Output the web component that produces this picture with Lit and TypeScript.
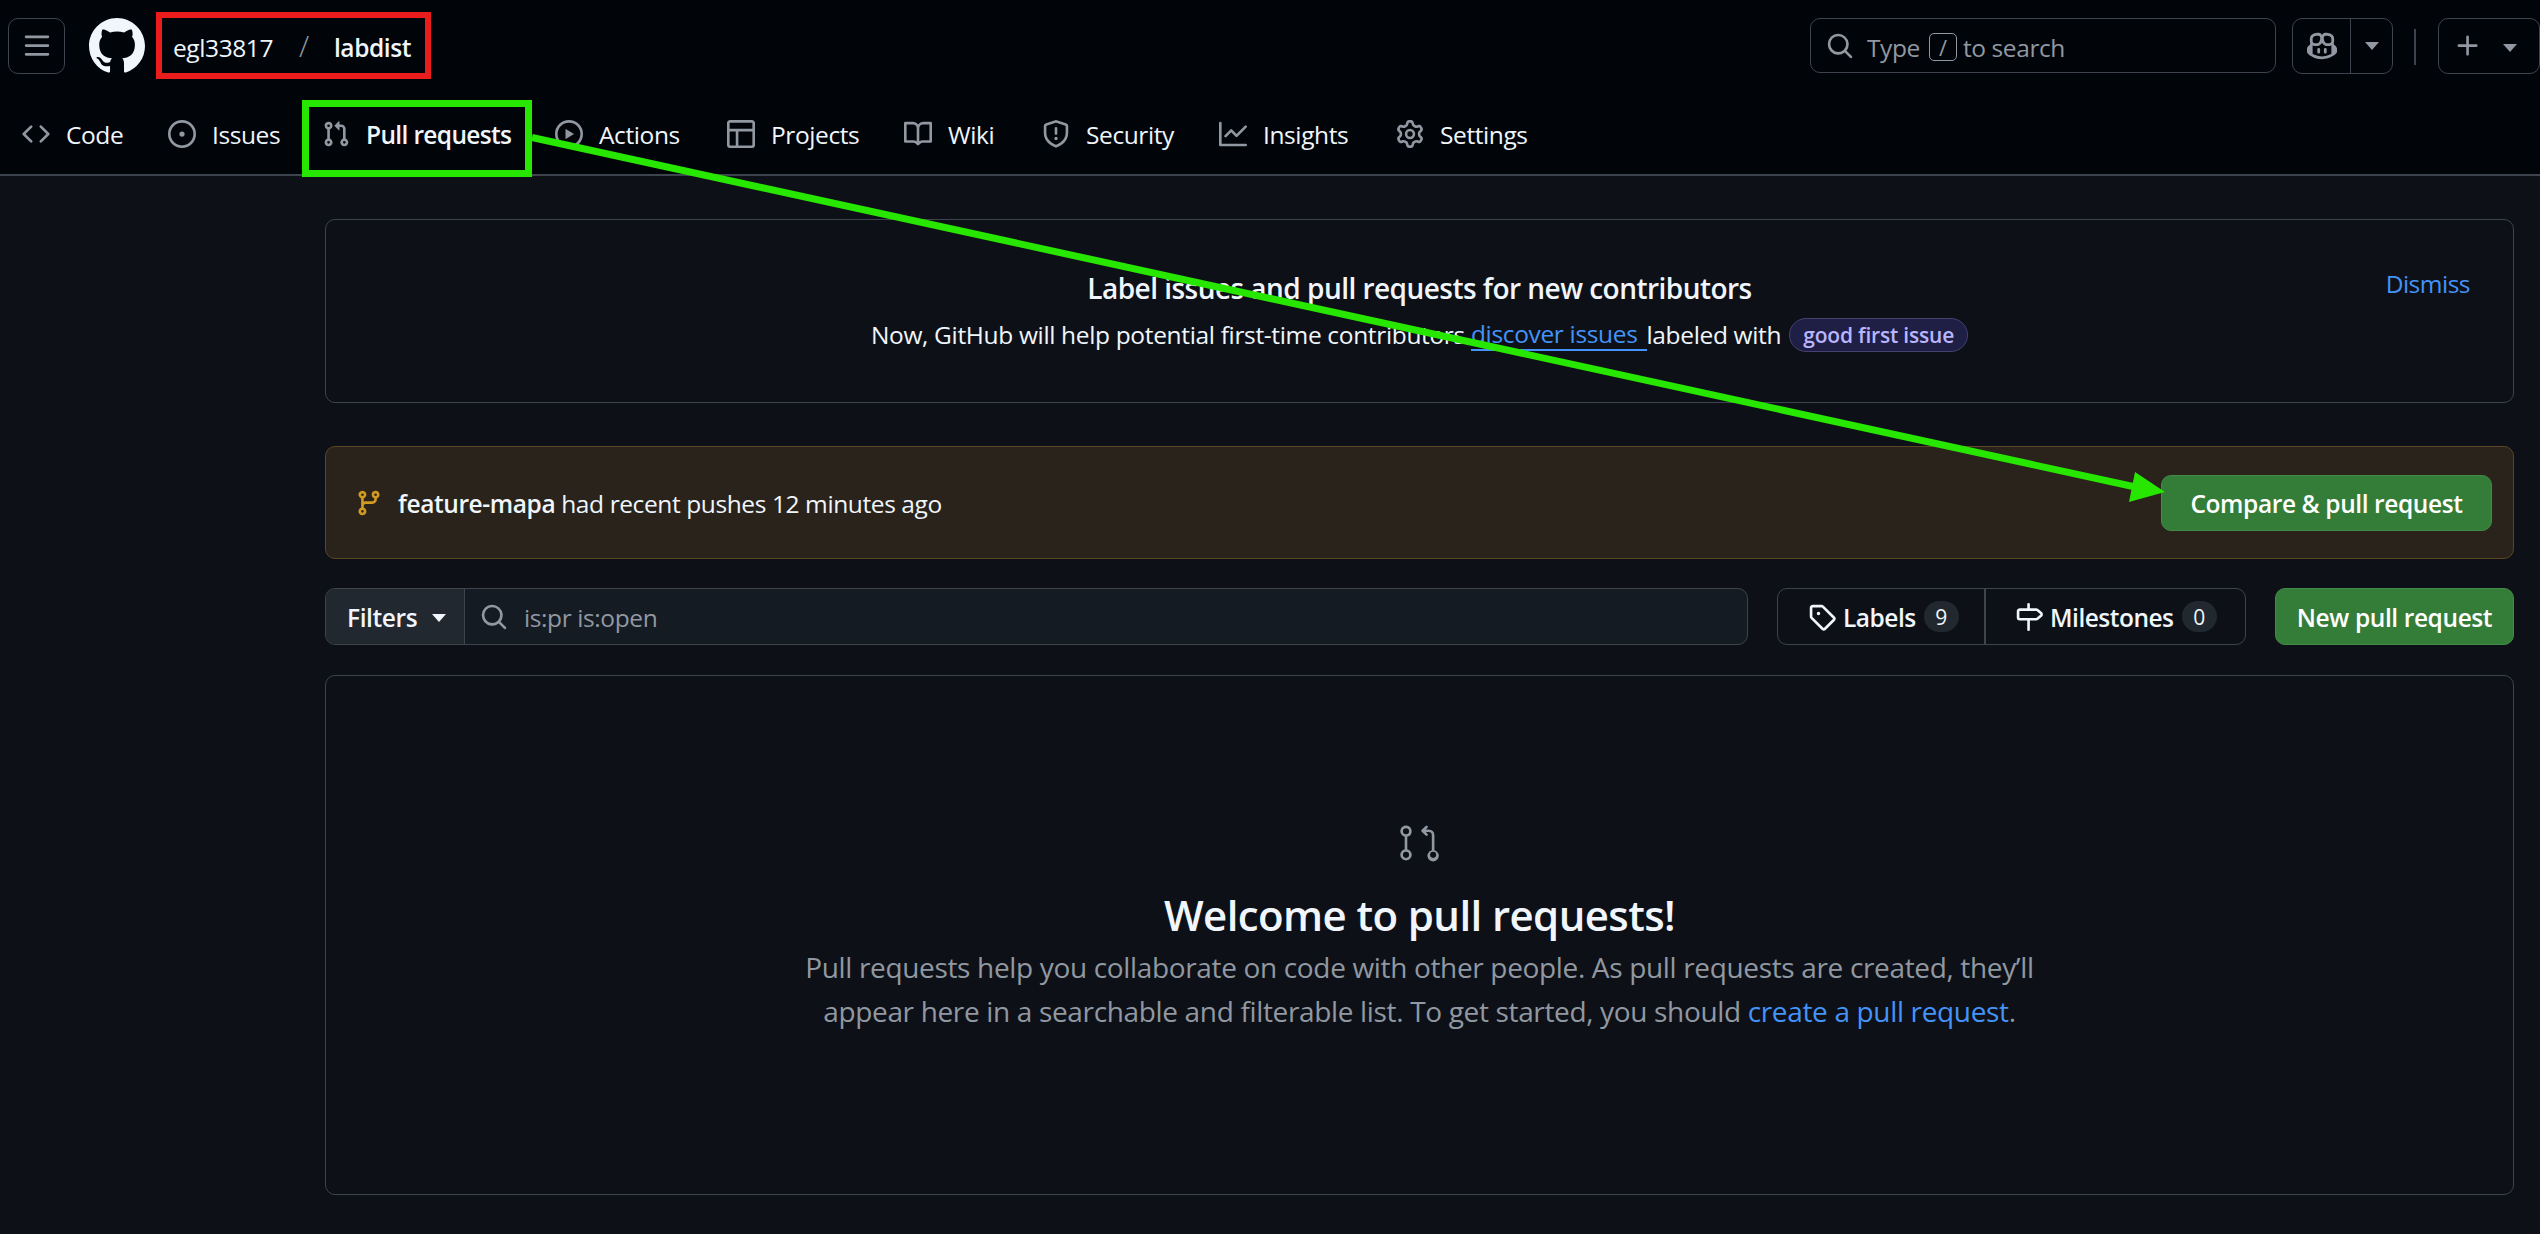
import { LitElement, html, css, svg } from "lit";
import { customElement } from "lit/decorators.js";

const ic = (d: string, size = 28, vb = 16) =>
  html`<svg class="ic" width=${size} height=${size} viewBox="0 0 ${vb} ${vb}" fill="currentColor" aria-hidden="true"><path d=${d}></path></svg>`;

const P = {
  code: "m11.28 3.22 4.25 4.25a.75.75 0 0 1 0 1.06l-4.25 4.25a.749.749 0 0 1-1.275-.326.749.749 0 0 1 .215-.734L13.94 8l-3.72-3.72a.749.749 0 0 1 .326-1.275.749.749 0 0 1 .734.215Zm-6.56 0a.751.751 0 0 1 1.042.018.751.751 0 0 1 .018 1.042L2.06 8l3.72 3.72a.749.749 0 0 1-.326 1.275.749.749 0 0 1-.734-.215L.47 8.53a.75.75 0 0 1 0-1.06Z",
  issue: "M8 9.5a1.5 1.5 0 1 0 0-3 1.5 1.5 0 0 0 0 3ZM8 0a8 8 0 1 1 0 16A8 8 0 0 1 8 0ZM1.5 8a6.5 6.5 0 1 0 13 0 6.5 6.5 0 0 0-13 0Z",
  pr: "M1.5 3.25a2.25 2.25 0 1 1 3 2.122v5.256a2.251 2.251 0 1 1-1.5 0V5.372A2.25 2.25 0 0 1 1.5 3.25Zm5.677-.177L9.573.677A.25.25 0 0 1 10 .854V2.5h1A2.5 2.5 0 0 1 13.5 5v5.628a2.251 2.251 0 1 1-1.5 0V5a1 1 0 0 0-1-1h-1v1.646a.25.25 0 0 1-.427.177L7.177 3.427a.25.25 0 0 1 0-.354ZM3.75 2.5a.75.75 0 1 0 0 1.5.75.75 0 0 0 0-1.5Zm0 9.5a.75.75 0 1 0 0 1.5.75.75 0 0 0 0-1.5Zm8.25.75a.75.75 0 1 0 1.5 0 .75.75 0 0 0-1.5 0Z",
  play: "M8 0a8 8 0 1 1 0 16A8 8 0 0 1 8 0ZM1.5 8a6.5 6.5 0 1 0 13 0 6.5 6.5 0 0 0-13 0Zm4.879-2.773 4.264 2.559a.25.25 0 0 1 0 .428l-4.264 2.559A.25.25 0 0 1 6 10.559V5.442a.25.25 0 0 1 .379-.215Z",
  table: "M0 1.75C0 .784.784 0 1.75 0h12.5C15.216 0 16 .784 16 1.75v12.5A1.75 1.75 0 0 1 14.25 16H1.75A1.75 1.75 0 0 1 0 14.25ZM6.5 6.5v8h7.75a.25.25 0 0 0 .25-.25V6.5Zm8-1.5V1.75a.25.25 0 0 0-.25-.25H1.75a.25.25 0 0 0-.25.25V5Zm-13 1.5v7.75c0 .138.112.25.25.25H5v-8Z",
  book: "M0 1.75A.75.75 0 0 1 .75 1h4.253c1.227 0 2.317.59 3 1.501A3.743 3.743 0 0 1 11.006 1h4.245a.75.75 0 0 1 .75.75v10.5a.75.75 0 0 1-.75.75h-4.507a2.25 2.25 0 0 0-1.591.659l-.622.621a.75.75 0 0 1-1.06 0l-.622-.621A2.25 2.25 0 0 0 5.258 13H.75a.75.75 0 0 1-.75-.75Zm7.251 10.324.004-5.073-.002-2.253A2.25 2.25 0 0 0 5.003 2.5H1.5v9h3.757a3.75 3.75 0 0 1 1.994.574ZM8.755 4.75l-.004 7.322a3.752 3.752 0 0 1 1.992-.572H14.5v-9h-3.495a2.25 2.25 0 0 0-2.25 2.25Z",
  shield: "M8.533.133a1.75 1.75 0 0 0-1.066 0l-5.25 1.68A1.75 1.75 0 0 0 1 3.48V7c0 1.566.32 3.182 1.303 4.682.983 1.498 2.585 2.813 5.032 3.855a1.697 1.697 0 0 0 1.33 0c2.447-1.042 4.049-2.357 5.032-3.855C14.68 10.182 15 8.566 15 7V3.48a1.75 1.75 0 0 0-1.217-1.667Zm-.61 1.429a.25.25 0 0 1 .153 0l5.25 1.68a.25.25 0 0 1 .174.238V7c0 1.358-.275 2.666-1.057 3.86-.784 1.194-2.121 2.34-4.366 3.297a.196.196 0 0 1-.154 0c-2.245-.956-3.582-2.104-4.366-3.298C2.775 9.666 2.5 8.36 2.5 7V3.48a.25.25 0 0 1 .174-.238ZM9 10.5a1 1 0 1 1-2 0 1 1 0 0 1 2 0Zm-.25-5.75a.75.75 0 1 0-1.5 0v3a.75.75 0 0 0 1.5 0Z",
  graph: "M1.5 1.75V13.5h13.75a.75.75 0 0 1 0 1.5H.75a.75.75 0 0 1-.75-.75V1.75a.75.75 0 0 1 1.5 0Zm14.28 2.53-5.25 5.25a.75.75 0 0 1-1.06 0L7 7.06 4.28 9.78a.751.751 0 0 1-1.042-.018.751.751 0 0 1-.018-1.042l3.25-3.25a.75.75 0 0 1 1.06 0L10 7.94l4.72-4.72a.751.751 0 0 1 1.042.018.751.751 0 0 1 .018 1.042Z",
  gear: "M8 0a8.2 8.2 0 0 1 .701.031C9.444.095 9.99.645 10.16 1.29l.288 1.107c.018.066.079.158.212.224.231.114.454.243.668.386.123.082.233.09.299.071l1.103-.303c.644-.176 1.392.021 1.82.63.27.385.506.792.704 1.218.315.675.111 1.422-.364 1.891l-.814.806c-.049.048-.098.147-.088.294.016.257.016.515 0 .772-.01.147.038.246.088.294l.814.806c.475.469.679 1.216.364 1.891a7.977 7.977 0 0 1-.704 1.217c-.428.61-1.176.807-1.82.63l-1.102-.302c-.067-.019-.177-.011-.3.071a5.909 5.909 0 0 1-.668.386c-.133.066-.194.158-.211.224l-.29 1.106c-.168.646-.715 1.196-1.458 1.26a8.006 8.006 0 0 1-1.402 0c-.743-.064-1.289-.614-1.458-1.26l-.289-1.106c-.018-.066-.079-.158-.212-.224a5.738 5.738 0 0 1-.668-.386c-.123-.082-.233-.09-.299-.071l-1.103.303c-.644.176-1.392-.021-1.82-.63a8.12 8.12 0 0 1-.704-1.218c-.315-.675-.111-1.422.363-1.891l.815-.806c.05-.048.098-.147.088-.294a6.214 6.214 0 0 1 0-.772c.01-.147-.038-.246-.088-.294l-.815-.806C.635 6.045.431 5.298.746 4.623a7.92 7.92 0 0 1 .704-1.217c.428-.61 1.176-.807 1.82-.63l1.102.302c.067.019.177.011.3-.071.214-.143.437-.272.668-.386.133-.066.194-.158.211-.224l.29-1.106C6.009.645 6.556.095 7.299.03 7.53.01 7.764 0 8 0Zm-.571 1.525c-.036.003-.108.036-.137.146l-.289 1.105c-.147.561-.549.967-.998 1.189-.173.086-.34.183-.5.29-.417.278-.97.423-1.529.27l-1.103-.303c-.109-.03-.175.016-.195.045-.22.312-.412.644-.573.99-.014.031-.021.11.059.19l.815.806c.411.406.562.957.53 1.456a4.709 4.709 0 0 0 0 .582c.032.499-.119 1.05-.53 1.456l-.815.806c-.081.08-.073.159-.059.19.162.346.353.677.573.989.02.03.085.076.195.046l1.102-.303c.56-.153 1.113-.008 1.53.27.161.107.328.204.501.29.447.222.85.629.997 1.189l.289 1.105c.029.109.101.143.137.146a6.6 6.6 0 0 0 1.142 0c.036-.003.108-.036.137-.146l.289-1.105c.147-.561.549-.967.998-1.189.173-.086.34-.183.5-.29.417-.278.97-.423 1.529-.27l1.103.303c.109.029.175-.016.195-.045.22-.313.411-.644.573-.99.014-.031.021-.11-.059-.19l-.815-.806c-.411-.406-.562-.957-.53-1.456a4.709 4.709 0 0 0 0-.582c-.032-.499.119-1.05.53-1.456l.815-.806c.081-.08.073-.159.059-.19a6.464 6.464 0 0 0-.573-.989c-.02-.03-.085-.076-.195-.046l-1.102.303c-.56.153-1.113.008-1.53-.27a4.44 4.44 0 0 0-.501-.29c-.447-.222-.85-.629-.997-1.189l-.289-1.105c-.029-.11-.101-.143-.137-.146a6.6 6.6 0 0 0-1.142 0ZM11 8a3 3 0 1 1-6 0 3 3 0 0 1 6 0ZM9.5 8a1.5 1.5 0 1 0-3.001.001A1.5 1.5 0 0 0 9.5 8Z",
  menu: "M1 2.75A.75.75 0 0 1 1.75 2h12.5a.75.75 0 0 1 0 1.5H1.75A.75.75 0 0 1 1 2.75Zm0 5A.75.75 0 0 1 1.75 7h12.5a.75.75 0 0 1 0 1.5H1.75A.75.75 0 0 1 1 7.75ZM1.75 12h12.5a.75.75 0 0 1 0 1.5H1.75a.75.75 0 0 1 0-1.5Z",
  mark: "M8 0c4.42 0 8 3.58 8 8a8.013 8.013 0 0 1-5.45 7.59c-.4.08-.55-.17-.55-.38 0-.27.01-1.13.01-2.2 0-.75-.25-1.23-.54-1.48 1.78-.2 3.65-.88 3.65-3.95 0-.88-.31-1.59-.82-2.15.08-.2.36-1.02-.08-2.12 0 0-.67-.22-2.2.82-.64-.18-1.32-.27-2-.27-.68 0-1.36.09-2 .27-1.53-1.03-2.2-.82-2.2-.82-.44 1.1-.16 1.92-.08 2.12-.51.56-.82 1.28-.82 2.15 0 3.06 1.86 3.75 3.64 3.95-.23.2-.44.55-.51 1.07-.46.21-1.61.55-2.33-.66-.15-.24-.6-.83-1.23-.82-.67.01-.27.38.01.53.34.19.73.9.82 1.13.16.45.68 1.31 2.69.94 0 .67.01 1.3.01 1.49 0 .21-.15.45-.55.38A7.995 7.995 0 0 1 0 8c0-4.42 3.58-8 8-8Z",
  search: "M10.68 11.74a6 6 0 0 1-7.922-8.982 6 6 0 0 1 8.982 7.922l3.04 3.04a.749.749 0 0 1-.326 1.275.749.749 0 0 1-.734-.215ZM11.5 7a4.499 4.499 0 1 0-8.997 0A4.499 4.499 0 0 0 11.5 7Z",
  plus: "M7.75 2a.75.75 0 0 1 .75.75V7h4.25a.75.75 0 0 1 0 1.5H8.5v4.25a.75.75 0 0 1-1.5 0V8.5H2.75a.75.75 0 0 1 0-1.5H7V2.75A.75.75 0 0 1 7.75 2Z",
  copilot: "M7.998 15.035c-4.562 0-7.873-2.914-7.998-3.749V9.338c.085-.628.677-1.686 1.588-2.065.013-.07.024-.143.036-.218.029-.183.06-.384.126-.612-.201-.508-.254-1.084-.254-1.656 0-.87.128-1.769.693-2.484.579-.733 1.494-1.124 2.724-1.261 1.206-.134 2.262.034 2.944.765.05.053.096.108.139.165.044-.057.094-.112.143-.165.682-.731 1.738-.899 2.944-.765 1.23.137 2.145.528 2.724 1.261.566.715.693 1.614.693 2.484 0 .572-.053 1.148-.254 1.656.066.228.098.429.126.612.012.076.024.148.037.218.924.385 1.522 1.471 1.591 2.095v1.872c0 .766-3.351 3.795-8.002 3.795Zm0-1.485c2.28 0 4.584-1.11 5.002-1.433V7.862l-.023-.116c-.49.21-1.075.291-1.727.291-1.146 0-2.059-.327-2.71-.991A3.222 3.222 0 0 1 8 6.303a3.24 3.24 0 0 1-.544.743c-.65.664-1.563.991-2.71.991-.652 0-1.236-.081-1.727-.291l-.023.116v4.255c.419.323 2.722 1.433 5.002 1.433ZM6.762 2.83c-.193-.206-.637-.413-1.682-.297-1.019.113-1.479.404-1.713.7-.247.312-.369.789-.369 1.554 0 .793.129 1.171.308 1.371.162.181.519.379 1.442.379.853 0 1.339-.235 1.638-.54.315-.322.527-.827.617-1.553.117-.935-.037-1.395-.241-1.614Zm4.155-.297c-1.044-.116-1.488.091-1.681.297-.204.219-.359.679-.242 1.614.091.726.303 1.231.618 1.553.299.305.784.54 1.638.54.922 0 1.28-.198 1.442-.379.179-.2.308-.578.308-1.371 0-.765-.123-1.242-.37-1.554-.233-.296-.693-.587-1.713-.7Z M6.25 9.037a.75.75 0 0 1 .75.75v1.501a.75.75 0 0 1-1.5 0V9.787a.75.75 0 0 1 .75-.75Zm4.25.75v1.501a.75.75 0 0 1-1.5 0V9.787a.75.75 0 0 1 1.5 0Z",
  branch: "M9.5 3.25a2.25 2.25 0 1 1 3 2.122V6A2.5 2.5 0 0 1 10 8.5H6a1 1 0 0 0-1 1v1.128a2.251 2.251 0 1 1-1.5 0V5.372a2.25 2.25 0 1 1 1.5 0v1.836A2.493 2.493 0 0 1 6 7h4a1 1 0 0 0 1-1v-.628A2.25 2.25 0 0 1 9.5 3.25Zm-6 0a.75.75 0 1 0 1.5 0 .75.75 0 0 0-1.5 0Zm8.25-.75a.75.75 0 1 0 0 1.5.75.75 0 0 0 0-1.5ZM4.25 12a.75.75 0 1 0 0 1.5.75.75 0 0 0 0-1.5Z",
  tag: "M1 7.775V2.75C1 1.784 1.784 1 2.75 1h5.025c.464 0 .91.184 1.238.513l6.25 6.25a1.75 1.75 0 0 1 0 2.474l-5.026 5.026a1.75 1.75 0 0 1-2.474 0l-6.25-6.25A1.752 1.752 0 0 1 1 7.775Zm1.5 0c0 .066.026.13.073.177l6.25 6.25a.25.25 0 0 0 .354 0l5.025-5.025a.25.25 0 0 0 0-.354l-6.25-6.25a.25.25 0 0 0-.177-.073H2.75a.25.25 0 0 0-.25.25ZM6 5a1 1 0 1 1 0 2 1 1 0 0 1 0-2Z",
  milestone: "M7.75 0a.75.75 0 0 1 .75.75V3h3.634c.414 0 .814.147 1.13.414l2.07 1.75a1.75 1.75 0 0 1 0 2.672l-2.07 1.75a1.75 1.75 0 0 1-1.13.414H8.5v5.25a.75.75 0 0 1-1.5 0V10H2.75A1.75 1.75 0 0 1 1 8.25v-3.5C1 3.784 1.784 3 2.75 3H7V.75A.75.75 0 0 1 7.75 0Zm4.384 8.5a.25.25 0 0 0 .161-.06l2.07-1.75a.248.248 0 0 0 0-.38l-2.07-1.75a.25.25 0 0 0-.161-.06H2.75a.25.25 0 0 0-.25.25v3.5c0 .138.112.25.25.25h9.384Z",
  pr24: "M16.28 2.22a.75.75 0 0 0-1.06 0l-2.25 2.25a.75.75 0 0 0 0 1.06l2.25 2.25a.751.751 0 0 0 1.042-.018.751.751 0 0 0 .018-1.042L15.31 5.75H17A1.75 1.75 0 0 1 18.75 7.5v8.6a3.25 3.25 0 1 0 1.5 0V7.5A3.25 3.25 0 0 0 17 4.25h-1.69l.97-.97a.75.75 0 0 0 0-1.06ZM7.25 5.25a3.25 3.25 0 1 0-4 3.163v7.174a3.25 3.25 0 1 0 1.5 0V8.413a3.25 3.25 0 0 0 2.5-3.163ZM4 3.5a1.75 1.75 0 1 1 0 3.5 1.75 1.75 0 0 1 0-3.5Zm0 13.5a1.75 1.75 0 1 1 0 3.5 1.75 1.75 0 0 1 0-3.5Zm15.5 0a1.75 1.75 0 1 1 0 3.5 1.75 1.75 0 0 1 0-3.5Z",
};

const NAV = [
  { label: "Code", icon: P.code, w: 146 },
  { label: "Issues", icon: P.issue, w: 154 },
  { label: "Pull requests", icon: P.pr, w: 233, active: true },
  { label: "Actions", icon: P.play, w: 172 },
  { label: "Projects", icon: P.table, w: 177 },
  { label: "Wiki", icon: P.book, w: 138 },
  { label: "Security", icon: P.shield, w: 177 },
  { label: "Insights", icon: P.graph, w: 177 },
  { label: "Settings", icon: P.gear, w: 160 },
];

@customElement("app-root")
export class AppRoot extends LitElement {
  static styles = css`
    :host { display: block; width: 2540px; height: 1234px; background: #0d1117; position: relative; overflow: hidden;
      font-family: "Open Sans", "Noto Sans", sans-serif; font-size: 24.5px; color: #f0f6fc; letter-spacing: -0.4px; }
    .ic { display: block; flex: none; }
    header { height: 176px; box-sizing: border-box; background: #010409; border-bottom: 2px solid #3d444d; display: flex; flex-direction: column; }
    .top { flex: none; height: 92px; box-sizing: border-box; display: flex; align-items: flex-start; padding: 18px 0 0 8px; }
    .iconbtn { width: 57px; height: 56px; box-sizing: border-box; border: 1px solid #3d444d; border-radius: 10px; display: flex; align-items: center; justify-content: center; color: #9198a1; }
    .logo { margin-left: 24px; color: #f0f6fc; }
    .crumbs { margin-left: 11px; height: 67px; margin-top: -6px; width: 275px; flex: none; box-sizing: border-box; border: 6px solid #ea1c1c; display: flex; align-items: center; padding: 3px 0 0 11px; }
    .crumbs .sep { color: #9198a1; margin: -4px 25px 0 26px; font-weight: 300; font-size: 30px; }
    .crumbs .repo { font-weight: 600; }
    .right { margin-left: auto; display: flex; align-items: flex-start; }
    .search { width: 466px; height: 55px; box-sizing: border-box; border: 1px solid #3d444d; border-radius: 10px; display: flex; align-items: center; padding-left: 15px; color: #9198a1; }
    .search .t1 { margin-left: 13px; padding-top: 3px; }
    .search .t2 { padding-top: 3px; }
    .kbd { width: 28px; height: 28px; box-sizing: border-box; border: 1px solid #9198a1; border-radius: 5px; margin: 3px 6px 0 9px; display: flex; align-items: center; justify-content: center; font-size: 22px; }
    .split { height: 56px; box-sizing: border-box; border: 1px solid #3d444d; border-radius: 10px; display: flex; color: #9198a1; }
    .split.cop { width: 101px; margin-left: 16px; }
    .split.add { width: 102px; }
    .split .a { width: 57px; display: flex; align-items: center; justify-content: center; border-right: 1px solid #3d444d; }
    .split.add .a { border-right: none; width: 43px; justify-content: flex-start; padding-left: 15px; box-sizing: border-box; }
    .split .b { flex: 1; display: flex; align-items: center; justify-content: center; }
    .split.add .b { justify-content: flex-start; padding: 4px 0 0 21px; }
    .caret { width: 0; height: 0; border-left: 7px solid transparent; border-right: 7px solid transparent; border-top: 8px solid currentColor; }
    .vsep { width: 2px; height: 36px; background: #3d444d; margin: 11px 22px 0 21px; }
    nav { flex: 1; box-sizing: border-box; display: flex; align-items: stretch; padding: 2px 0 0 22px; }
    .tab { display: flex; align-items: center; gap: 16px; flex: none; }
    .tab svg { color: #9198a1; }
    .tab.on { font-weight: 600; letter-spacing: -0.65px; }
    main { padding: 43px 26px 0 325px; display: flex; flex-direction: column; }
    .box { border: 1px solid #3d444d; border-radius: 10px; box-sizing: border-box; }
    .tip { height: 184px; position: relative; display: flex; flex-direction: column; align-items: center; padding-top: 46px; }
    .tip h3 { margin: 0; font-size: 28px; font-weight: 600; line-height: 44px; letter-spacing: -0.53px; }
    .tip p { margin: 4px 0 0; line-height: 42px; display: flex; align-items: center; white-space: pre; letter-spacing: -0.34px; }
    .tip .link { color: #4493f8; border-bottom: 2px solid #4493f8; line-height: 30px; padding-right: 9px; }
    .pill { margin-left: 8px; height: 34px; box-sizing: border-box; border: 1px solid #44416f; border-radius: 18px; background: #1f1e45; color: #b9b5ff; font-size: 21px; font-weight: 600; padding: 0 13px; display: flex; align-items: center; letter-spacing: -0.2px; }
    .dismiss { position: absolute; right: 43px; top: 44px; color: #4493f8; line-height: 40px; letter-spacing: -0.5px; }
    .push { height: 113px; margin-top: 43px; background: #29231b; border: 1px solid #5b4621; border-radius: 10px; box-sizing: border-box; display: flex; align-items: center; padding: 0 21px 0 29px; }
    .push svg { color: #d29922; }
    .push .msg { margin-left: 15px; padding-top: 2px; }
    .push b { font-weight: 600; }
    .btn { background: #347d39; border: 1px solid #428a47; box-sizing: border-box; border-radius: 10px; color: #fff; font-weight: 600; display: flex; align-items: center; justify-content: center; padding-top: 2px; }
    .push .btn { margin-left: auto; width: 331px; height: 56px; }
    .bar { margin-top: 29px; height: 57px; display: flex; }
    .fgroup { flex: none; width: 1423px; display: flex; box-sizing: border-box; border: 1px solid #3d444d; border-radius: 10px; background: #151b23; overflow: hidden; }
    .filters { width: 139px; background: #212830; border-right: 1px solid #3d444d; display: flex; align-items: center; padding: 2px 0 0 21px; box-sizing: border-box; font-weight: 600; }
    .filters .caret { margin-left: 15px; }
    .finput { display: flex; align-items: center; padding-left: 15px; color: #9198a1; }
    .finput span { margin-left: 16px; padding-top: 2px; }
    .lm { margin-left: 29px; width: 469px; display: flex; border: 1px solid #3d444d; border-radius: 10px; box-sizing: border-box; }
    .lm > div { display: flex; align-items: center; font-weight: 600; }
    .lm .l { width: 208px; border-right: 2px solid #3d444d; padding-left: 30px; box-sizing: border-box; }
    .lm .m { padding-left: 29px; }
    .lm span.t { margin-left: 7px; padding-top: 2px; letter-spacing: -0.5px; }
    .count { margin-left: 8px; width: 35px; height: 31px; border-radius: 16px; background: #212830; display: flex; align-items: center; justify-content: center; font-size: 21px; font-weight: 500; }
    .bar .btn { margin-left: 29px; width: 239px; }
    .blank { margin-top: 30px; height: 520px; display: flex; flex-direction: column; align-items: center; padding-top: 146px; }
    .blank svg { color: #9198a1; }
    .blank h2 { margin: 21px 0 0; font-size: 42px; font-weight: 600; line-height: 60px; letter-spacing: -0.6px; }
    .blank p { margin: 0; font-size: 28px; line-height: 44px; color: #9198a1; text-align: center; white-space: pre; letter-spacing: -0.34px; }
    .blank a { color: #4493f8; }
    .marks { position: absolute; left: 0; top: 0; pointer-events: none; }
  `;

  render() {
    return html`
      <header>
        <div class="top">
          <div class="iconbtn">${ic(P.menu)}</div>
          <div class="logo">${ic(P.mark, 56)}</div>
          <div class="crumbs"><span>egl33817</span><span class="sep">/</span><span class="repo">labdist</span></div>
          <div class="right">
            <div class="search">
              ${ic(P.search)}
              <span class="t1">Type</span><span class="kbd">/</span><span class="t2">to search</span>
            </div>
            <div class="split cop">
              <div class="a">${ic(P.copilot, 30)}</div>
              <div class="b"><span class="caret"></span></div>
            </div>
            <div class="vsep"></div>
            <div class="split add">
              <div class="a">${ic(P.plus)}</div>
              <div class="b"><span class="caret"></span></div>
            </div>
          </div>
        </div>
        <nav>
          ${NAV.map(
            (n) => html`<div class="tab ${n.active ? "on" : ""}" style="width:${n.w}px">${ic(n.icon)}<span>${n.label}</span></div>`
          )}
        </nav>
      </header>
      <main>
        <section class="box tip">
          <h3>Label issues and pull requests for new contributors</h3>
          <p>Now, GitHub will help potential first-time contributors <span class="link">discover issues</span>labeled with<span class="pill">good first issue</span></p>
          <span class="dismiss">Dismiss</span>
        </section>
        <section class="push">
          ${ic(P.branch)}
          <span class="msg"><b>feature-mapa</b> had recent pushes 12 minutes ago</span>
          <div class="btn">Compare &amp; pull request</div>
        </section>
        <section class="bar">
          <div class="fgroup">
            <div class="filters">Filters<span class="caret"></span></div>
            <div class="finput">${ic(P.search)}<span>is:pr is:open</span></div>
          </div>
          <div class="lm">
            <div class="l">${ic(P.tag)}<span class="t">Labels</span><span class="count">9</span></div>
            <div class="m">${ic(P.milestone)}<span class="t">Milestones</span><span class="count">0</span></div>
          </div>
          <div class="btn">New pull request</div>
        </section>
        <section class="box blank">
          ${ic(P.pr24, 42, 24)}
          <h2>Welcome to pull requests!</h2>
          <p>Pull requests help you collaborate on code with other people. As pull requests are created, they’ll
appear here in a searchable and filterable list. To get started, you should <a>create a pull request</a>.</p>
        </section>
      </main>
      <svg class="marks" width="2540" height="1234" viewBox="0 0 2540 1234" fill="none">
        ${svg`<rect x="305.5" y="103.5" width="223" height="70" stroke="#27e600" stroke-width="7"></rect>
        <line x1="532" y1="137.5" x2="2140" y2="488" stroke="#27e600" stroke-width="7"></line>
        <polygon points="2165,492 2135,472 2129,502" fill="#27e600"></polygon>`}
      </svg>
    `;
  }
}
